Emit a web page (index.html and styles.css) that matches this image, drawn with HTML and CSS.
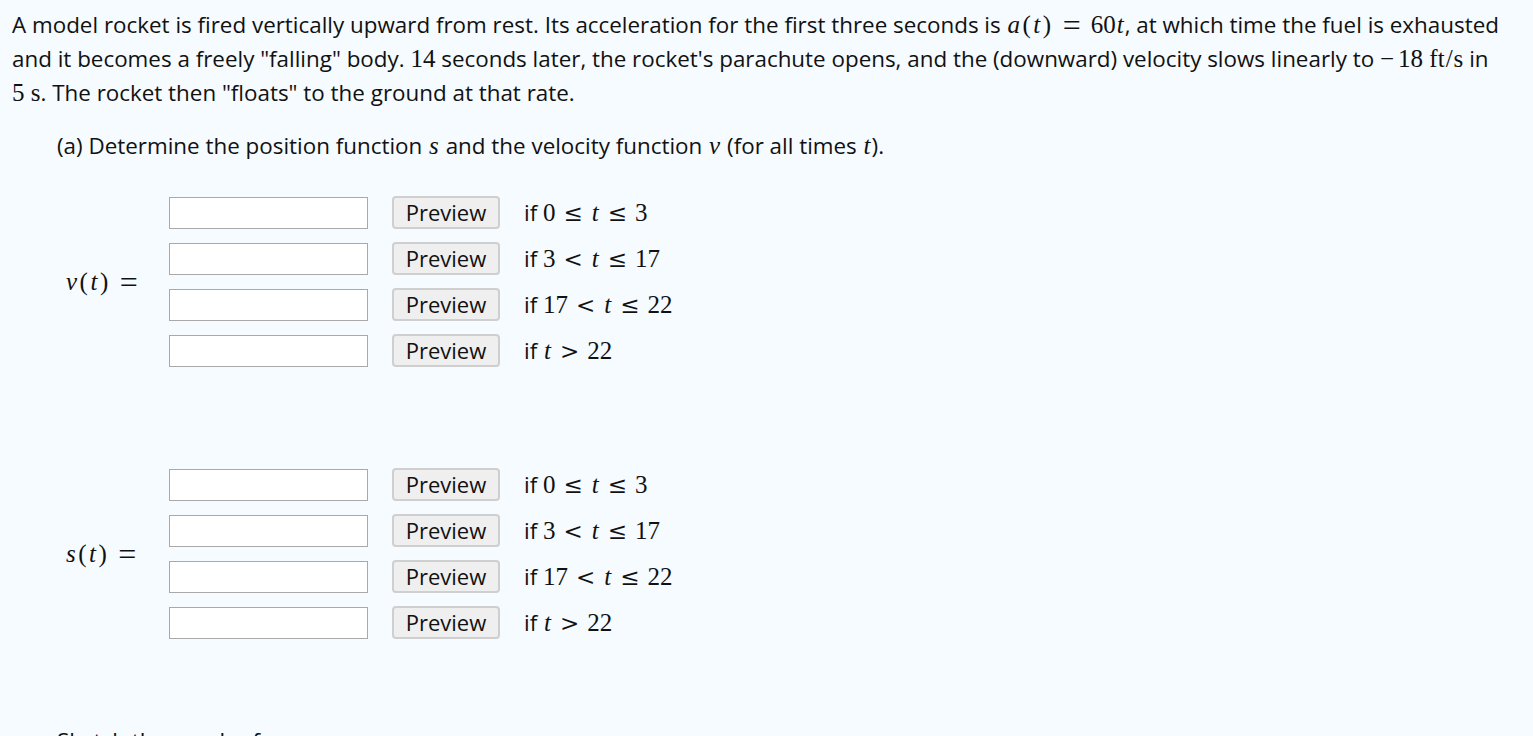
FILE: index.html
```html
<!DOCTYPE html>
<html>
<head>
<meta charset="utf-8">
<link rel="stylesheet" href="styles.css">
</head>
<body>
<div class="problem">
  <p class="intro">A model rocket is fired vertically upward from rest. Its acceleration for the first three seconds is <span class="m"><i>a</i><span class="p">(</span><i>t</i><span class="p">)</span><span class="rel eq">=</span>60<i>t</i></span>, at which time the fuel is exhausted and it becomes a freely "falling" body. <span class="m">14</span> seconds later, the rocket's parachute opens, and the (downward) velocity slows linearly to <span class="m"><span class="minus">−</span>18 ft<span class="sl">/</span>s</span> in <span class="m">5 s</span>. The rocket then "floats" to the ground at that rate.</p>

  <div class="part">
    <p class="q">(a) Determine the position function <span class="m"><i>s</i></span> and the velocity function <span class="m"><i>v</i></span> (for all times <span class="m"><i>t</i></span>).</p>

    <div class="piecewise">
      <div class="lhs m"><i>v</i><span class="p">(</span><i>t</i><span class="p">)</span><span class="rel eq">=</span></div>
      <div class="rows">
        <div class="row"><input class="ans" type="text"><button class="prev">Preview</button><span class="cond">if <span class="m">0<span class="rel">≤</span><i>t</i><span class="rel">≤</span>3</span></span></div>
        <div class="row"><input class="ans" type="text"><button class="prev">Preview</button><span class="cond">if <span class="m">3<span class="rel">&lt;</span><i>t</i><span class="rel">≤</span>17</span></span></div>
        <div class="row"><input class="ans" type="text"><button class="prev">Preview</button><span class="cond">if <span class="m">17<span class="rel">&lt;</span><i>t</i><span class="rel">≤</span>22</span></span></div>
        <div class="row"><input class="ans" type="text"><button class="prev">Preview</button><span class="cond">if <span class="m"><i>t</i><span class="rel">&gt;</span>22</span></span></div>
      </div>
    </div>

    <div class="piecewise second">
      <div class="lhs m"><i>s</i><span class="p">(</span><i>t</i><span class="p">)</span><span class="rel eq">=</span></div>
      <div class="rows">
        <div class="row"><input class="ans" type="text"><button class="prev">Preview</button><span class="cond">if <span class="m">0<span class="rel">≤</span><i>t</i><span class="rel">≤</span>3</span></span></div>
        <div class="row"><input class="ans" type="text"><button class="prev">Preview</button><span class="cond">if <span class="m">3<span class="rel">&lt;</span><i>t</i><span class="rel">≤</span>17</span></span></div>
        <div class="row"><input class="ans" type="text"><button class="prev">Preview</button><span class="cond">if <span class="m">17<span class="rel">&lt;</span><i>t</i><span class="rel">≤</span>22</span></span></div>
        <div class="row"><input class="ans" type="text"><button class="prev">Preview</button><span class="cond">if <span class="m"><i>t</i><span class="rel">&gt;</span>22</span></span></div>
      </div>
    </div>

    <p class="q sketch">Sketch the graph of <span class="m"><i>v</i></span>.</p>
  </div>
</div>
</body>
</html>
```

FILE: styles.css
```css
html, body {
  margin: 0;
  padding: 0;
  background: #f5fbfe;
}
body {
  font-family: "Open Sans", "Liberation Sans", sans-serif;
  font-size: 22.4px;
  line-height: 34px;
  color: #111;
}
.problem {
  padding: 8px 16px 0 12px;
}
.intro {
  margin: 0;
}
.m {
  font-family: "Liberation Serif", "DejaVu Serif", serif;
  font-size: 25px;
  line-height: 0;
  white-space: nowrap;
}
.m i {
  font-style: italic;
  padding: 0 1px;
}
.p {
  padding: 0 1.5px;
}
.rel {
  display: inline-block;
  font-family: "DejaVu Serif", "Liberation Serif", serif;
  padding: 0 8px;
  font-size: 23px;
  line-height: 0;
}
.rel.eq {
  font-family: "Liberation Serif", "DejaVu Serif", serif;
  font-size: 32px;
  padding: 0 10px;
  vertical-align: -3px;
}
.minus {
  padding-right: 4px;
}
.sl {
  padding: 0 1px;
}
.part {
  padding-left: 45px;
}
.q {
  margin: 19px 0 0 0;
}
.piecewise {
  display: flex;
  align-items: center;
  margin-top: 33px;
}
.piecewise.second {
  margin-top: 101px;
}
.lhs {
  width: 112px;
  padding-left: 8px;
  box-sizing: border-box;
  line-height: 34px;
}
.rows {
  display: flex;
  flex-direction: column;
  gap: 13px;
}
.row {
  display: flex;
  align-items: center;
  height: 33px;
}
.ans {
  width: 199px;
  height: 32px;
  box-sizing: border-box;
  border: 1px solid #a9a9a9;
  background: #fff;
  margin: 0;
  padding: 2px 4px;
  font: inherit;
}
.prev {
  margin: 0 0 0 24px;
  width: 108px;
  height: 33px;
  box-sizing: border-box;
  border: 2px solid #cfcfcf;
  border-radius: 4px;
  background: #efefef;
  font-family: "Open Sans", "Liberation Sans", sans-serif;
  font-size: 22px;
  line-height: 27px;
  color: #111;
  padding: 0;
}
.cond {
  margin-left: 24px;
}
.sketch {
  margin-top: 85px;
}
```
